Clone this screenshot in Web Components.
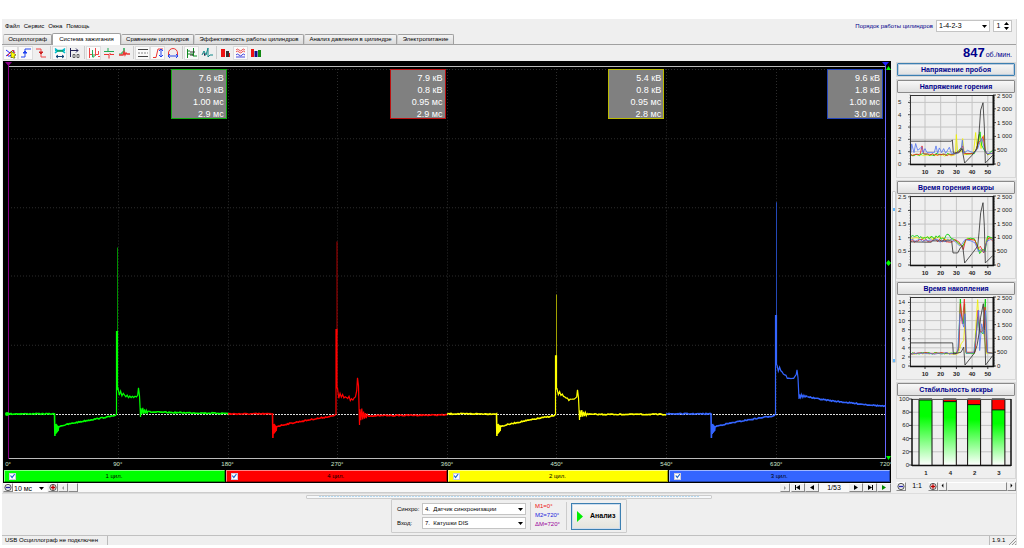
<!DOCTYPE html>
<html lang="ru">
<head>
<meta charset="utf-8">
<title>USB Осциллограф</title>
<style>
html,body{margin:0;background:#fff}
body{font:6px/10px "Liberation Sans",Arial,sans-serif;color:#000}
</style>
</head>
<body>
<scope-app></scope-app>
<script>
const RESET = `*{box-sizing:border-box}button,select,input{font:inherit;color:inherit;margin:0;padding:0}button{border:0;background:none}`;
function element(name, css, html) {
  customElements.define(name, class extends HTMLElement {
    connectedCallback() {
      if (this.shadowRoot) return;
      const root = this.attachShadow({mode: 'open'});
      const body = typeof html === 'function' ? html(this) : html;
      root.innerHTML = `<style>${RESET}${css}</style>${body}`;
    }
  });
}

/* Drop-down with a small black arrow */
element('drop-down', `
:host{display:block;position:relative}
select{appearance:none;width:100%;height:100%;border:1px solid #c4c4c4;border-radius:0;background:#fff;padding:0 10px 0 2px;display:block;outline:0}
:host([flat]) select{border-color:#fff;padding-left:0}
svg{position:absolute;right:3px;top:50%;margin-top:-1px;pointer-events:none}
`, el => `<select aria-label="${el.getAttribute('label')}"><option>${el.getAttribute('value')}</option></select>
<svg width="5" height="3"><path d="M0 0h5L2.500 3z"/></svg>`);

/* Menu */
element('menu-bar', `
:host{display:flex;height:14px;align-items:center;justify-content:space-between;padding:0 4px 0 3px}
nav,.order{display:flex;align-items:center}
nav{gap:4px}
nav button{line-height:14px}
label{color:#00008b;margin-right:3px}
drop-down{width:54px;height:12px;font-size:7px}
.spin{display:flex;width:19px;height:12px;border:1px solid #c4c4c4;background:#fff;margin-left:3px;align-items:center;font-size:7px}
.spin input{border:0;width:9px;height:10px;text-align:center;background:none}
`, `<nav><button>Файл</button><button>Сервис</button><button>Окна</button><button>Помощь</button></nav>
<div class="order"><label for="n">Порядок работы цилиндров</label><drop-down label="Порядок работы цилиндров" value="1-4-2-3"></drop-down>
<div class="spin"><input id="n" value="1"><svg width="7" height="8"><path d="M1 3h5L3.500 0zM1 5h5L3.500 8z"/></svg></div></div>`);

/* Tabs */
element('tab-strip', `
:host{display:flex;height:12px;align-items:flex-end;border-bottom:1px solid #a0a0a0;padding-left:1px}
button{height:10px;line-height:9px;border:1px solid #a0a0a0;border-bottom:0;border-left-color:#d0d0d0;border-radius:2px 2px 0 0;background:linear-gradient(#f4f4f4,#dadada);white-space:nowrap;overflow:visible}
button:first-child{border-left-color:#a0a0a0}
button.on{height:12px;background:#fff;margin-bottom:-1px;border-color:#a0a0a0}
`, `<button style="width:49px">Осциллограф</button><button class="on" style="width:69px">Система зажигания</button><button style="width:73px">Сравнение цилиндров</button><button style="width:110px">Эффективность работы цилиндров</button><button style="width:93px">Анализ давления в цилиндре</button><button style="width:57px">Электропитание</button>`);

/* Toolbar */
const ICONS = [
 [['Запуск','<path d="M1 3l4 3-4 3M3 9q4 1 6-6" stroke="#22f"/><path d="M2 9l6-6 2 3" stroke="#e22"/><path d="M6 4l5 4-2 1 1 2-2 0-1-1-1 1z" fill="#ff0" stroke="#440" stroke-width=".6"/>',1],
  ['Фронт','<path d="M1 10h4V2h6" stroke="#24e"/><path d="M3 6l2-2 2 2z" fill="#24e" stroke="#24e"/>',1],
  ['Спад','<path d="M1 2h5v8h5" stroke="#e44"/><path d="M4 5l2 2 2-2z" fill="#c22" stroke="#c22"/>']],
 [['Масштаб','<path d="M1 1.500q5 5 10 0M1 6q5-5 10 0M1 3.500h10" stroke="#0bc" stroke-width="1.500"/><path d="M3 4h6" stroke="#182"/><path d="M2 9.500h8M4 8L2 9.500 4 11M8 8l2 1.500L8 11" stroke="#147"/>',1],
  ['Сдвиг','<path d="M1.500 1v9M1 3.500h8M7 1.500l2 2-2 2" stroke="#225"/><path d="M4 7.500h2v3H4zM8 7.500h2v3H8z" stroke="#444" stroke-width=".8"/>']],
 [['Парад','<path d="M1.500 11V1M2 7.500h2.500V3" stroke="#e44"/><path d="M4.500 3v7H6V7" stroke="#2a5"/><path d="M7.500 1v8M8 7.500h2.500V4M10 9.500h2" stroke="#e44"/>',1],
  ['Растр','<path d="M1 4.500h4V1M5 4.500h6" stroke="#2a5"/><path d="M1 7.500h5v4M7 6v1.500h4" stroke="#e33"/>'],
  ['Наложение','<path d="M1 7h3V5h2V1v7" stroke="#2a5"/><path d="M1 8h4l1-3 1 3 1-2 1 1h3" stroke="#e33" stroke-width="1.400"/>']],
 [['Линии','<path d="M1 2.500h10M1 9.500h10" stroke="#444"/><path d="M1 6h10" stroke="#888" stroke-dasharray="2 1"/>',1],
  ['Высота','<path d="M1 10.500h3L6 2h5" stroke="#e33"/><path d="M9 2v8M7 4l2-2 2 2M7 8l2 2 2-2" stroke="#24e"/>',1],
  ['Дуга','<path d="M1.500 8V6a4.500 4.500 0 0 1 9 0v2" stroke="#e33"/><path d="M1 9h10M3 7L1 9l2 2M9 7l2 2-2 2" stroke="#24e"/>']],
 [['Значения','<path d="M1.500 2v9M1 4h3M1 7h6v2h4M7.500 1v8" stroke="#182"/><path d="M4 5h5M4 8h3" stroke="#333"/>',1],
  ['Амплитуда','<path d="M1 8l2-4 2 4 2-7v9l2-2h3" stroke="#188"/><path d="M3 6l1 3" stroke="#224"/>']],
 [['Отчет','<rect x="1" y="2" width="4" height="8" fill="#e11"/><rect x="6" y="4" width="3" height="6" fill="#333"/><path d="M9.500 6v4" stroke="#e11"/>'],
  ['Волны','<path d="M1 3q1-2 3 0t3 0 3 0M1 5q1-2 3 0t3 0 3 0" stroke="#e55"/><path d="M1 8q1-2 3 0t3 0 3 0M1 10h9" stroke="#44d"/>',1],
  ['Гистограмма','<rect x="1" y="2" width="3" height="8" fill="#e11"/><rect x="4.500" y="4" width="3" height="6" fill="#118"/><rect x="8" y="3" width="3" height="7" fill="#181"/>']]
];
element('tool-bar', `
:host{display:flex;height:15px;align-items:center;justify-content:space-between;padding:0 4px 0 1px}
.g{display:flex}.all{display:flex;gap:4px}
.g+.g::before{content:"";width:1px;height:13px;background:#ccc;margin:0 1px 0 -2px}
button{width:15px;height:14px;display:flex;align-items:center;justify-content:center}
button.on{background:#fafafa;border:1px solid #ddd}
svg{flex:none}
.rpm{display:flex;align-items:baseline;gap:1px;color:#00008b;font-size:7px}
b{font:bold 13px/14px "Liberation Sans",sans-serif}
`, () => `<div class="all">${ICONS.map(g => `<div class="g">${g.map(([n, p, on]) => `<button class="${on ? 'on' : ''}" aria-label="${n}"><svg width="12" height="12" viewBox="0 0 12 12" fill="none">${p}</svg></button>`).join('')}</div>`).join('')}</div>
<div class="rpm"><b>847</b><span>об./мин.</span></div>`);

/* Readings of one cylinder */
element('reading-box', `
:host{display:block;width:56px;height:50px;border:1px solid var(--c);background:#808080;color:#fff;font:9px/12px "Liberation Sans",sans-serif;text-align:right;padding:2px 2px 0 0;white-space:nowrap}
`, el => el.getAttribute('values').split('|').map(v => `<div>${v}</div>`).join(''));

/* Waveform */
let seed = 7;
const rnd = () => (seed = seed * 16807 % 2147483647) / 2147483647 - .5;
const P = a => a.map(p => p.join(',')).join(' ');
function trace(t) {
  const a = [], peak = t.peakX;
  for (let x = t.start; x < t.drop; x++) a.push([x, 413 + rnd()]);
  const ring = [0, t.low, 423, 433, 423, 432, 424, 431, 425, 430];
  ring.forEach((y, i) => a.push([t.drop + i * .4, i ? y : 413]));
  for (let x = t.drop + 4; x < peak - 1; x++) {
    const k = (x - t.drop) / (peak - t.drop);
    a.push([x, 427 - 12.500 * Math.pow(k, .8) + rnd()]);
  }
  a.push([peak - 1, 414]);
  const b = [[peak - .5, 414], [peak - .5, t.bright], [peak + .5, t.bright], [peak + .5, t.burn[0]]];
  const n = t.burn.length;
  for (let i = 0; i < n; i++) b.push([peak + 1 + i * (t.end - peak - 1) / n, t.burn[i] + rnd() * 1.5]);
  b.push([t.end - .5, t.bump], [t.end + .5, t.bump + 8], [t.end + 1.500, t.fall]);
  const d = t.fall - t.tail[0];
  [-.9, .6, -1, .5, -.6, .4, -.4, .3, -.2].forEach((k, i) => b.push([t.end + 2 + i * .9, t.tail[0] + k * d * .8]));
  const c = [];
  for (let x = t.end + 10; x <= t.stop; x++) {
    const k = (x - t.end - 10) / (t.stop - t.end - 10);
    c.push([x, t.tail[0] + (t.tail[1] - t.tail[0]) * Math.pow(k, .7) + rnd()]);
  }
  b.push(c[0]);
  return `<path d="M${peak + .5} ${t.top}V${t.bright + 4}" stroke="${t.dark}"/><g stroke="${t.color}"><polyline points="${P(a)}" stroke-width="1.600"/><polyline points="${P(b)}" stroke-width="1.200"/><polyline points="${P(c)}" stroke-width="1.600"/></g>`;
}
const TRACES = [
 {start:8,drop:54.500,low:435,peakX:117,top:247,bright:331,burn:[388,395,390,395,392,394,396,394,397,395,396,395,396,395,396,394],end:139,bump:387,fall:416,tail:[411,412.500],stop:228,color:'#0f0',dark:'#009000'},
 {start:228,drop:272.500,low:437,peakX:336.500,top:241,bright:329,burn:[387,397,392,397,394,397,396,397,398,396,400,398,399,397,396,390],end:358,bump:377,fall:424,tail:[415,414],stop:447,color:'#f00',dark:'#b00000'},
 {start:447,drop:496.500,low:435,peakX:556,top:294,bright:355,burn:[388,394,391,395,394,396,396,397,398,399,399,399,398,398,397,396],end:578,bump:389,fall:419,tail:[413.500,413.500],stop:666,color:'#ff0',dark:'#a0a000'},
 {start:666,drop:711,low:437,peakX:776,top:202,bright:315,burn:[364,370,366,370,371,373,374,375,377,377,378,378,378,377,376,374],end:797.500,bump:369,fall:398,tail:[395.500,405.500],stop:886,color:'#3465ff',dark:'#2348b8'}
];
element('wave-plot', `:host{display:block;min-height:200px;position:relative}
svg{position:absolute;inset:0;width:100%;height:100%}`, () => `
<svg viewBox="3 61 888 398" preserveAspectRatio="none" fill="none">
<g stroke="#2c2c2c" stroke-dasharray="1 2">
${[69.500,138.500,207.500,275.500,344.500].map(y => `<path d="M8 ${y}H886"/>`).join('')}
${[118,228,337,447,556,666,776].map(x => `<path d="M${x}.5 69V458"/>`).join('')}</g>
<path d="M8 66.500H886M8 457.500H886" stroke="#bbb"/>
<path d="M8 413.500H886" stroke="#ddd" stroke-dasharray="2 1"/>
<path d="M8.500 63V458" stroke="#808"/>
<path d="M885.500 63V458" stroke="#66f"/>
${TRACES.map(trace).join('')}
<path d="M5 62h7l-3.500 4z" fill="#808"/><path d="M882 62h7l-3.500 4z" fill="#22f"/>
<circle cx="7" cy="413" r="2" fill="#0f0"/>
<path d="M886 70h5l-2.500-4zM886 262.500l2.500-3 2.500 3-2.500 3zM886 455h5l-2.500 4z" fill="#0f0"/>
</svg>`);

/* Scope view: plot, degree scale, cylinder bars */
element('scope-view', `
:host{display:flex;flex-direction:column;background:#000;position:relative;min-width:0}
wave-plot{flex:1}
.deg{display:flex;justify-content:space-between;height:10px;padding:0 5px;color:#cfe8cf;line-height:9px}
.deg span{width:0;display:flex;justify-content:center}
.read{position:absolute;top:8px;left:5px;right:8px;display:grid;grid-template-columns:repeat(4,1fr);justify-items:end}
.cyl{display:grid;grid-template-columns:repeat(4,1fr);gap:1px;padding:0 1px 1px}
label{display:flex;align-items:center;height:12px;background:var(--c);border:1px solid;border-color:#ffffff88 #0005 #0005 #ffffff88;padding-left:4px;text-align:center}
label span{flex:1;padding-right:12px}
input{appearance:none;width:7px;height:7px;background:#fff;border:1px solid #ccd;position:relative}
input::before{content:"";position:absolute;inset:0;background:#26c;clip-path:polygon(0 45%,20% 35%,40% 60%,90% 0,100% 20%,42% 100%)}
`, () => {
  const cyl = [['1','#0f0','#1a1','7.6 кВ|0.9 кВ|1.00 мс|2.9 мс'],['4','#f00','#b11','7.9 кВ|0.8 кВ|0.95 мс|2.9 мс'],['2','#ff0','#bb0','5.4 кВ|0.8 кВ|0.95 мс|2.8 мс'],['3','#3465ff','#24b','9.6 кВ|1.8 кВ|1.00 мс|3.0 мс']];
  return `<wave-plot></wave-plot>
<div class="deg">${[0,90,180,270,360,450,540,630,720].map(d => `<span>${d}°</span>`).join('')}</div>
<div class="cyl">${cyl.map(c => `<label style="--c:${c[1]}"><input type="checkbox" checked><span>${c[0]} цил.</span></label>`).join('')}</div>
<div class="read">${cyl.map(c => `<reading-box style="--c:${c[2]}" values="${c[3]}"></reading-box>`).join('')}</div>`;
});

/* Round zoom glyphs and arrows */
const ZOOM = s => `<svg width="9" height="9" viewBox="0 0 9 9" fill="none"><circle cx="4.500" cy="4.500" r="3.500" stroke="#444"/><path d="${s ? 'M2 4.500h5M4.500 2v5' : 'M2 4.500h5'}" stroke="${s ? '#b00' : '#22a'}" stroke-width="1.500"/></svg>`;
const ARROW = (d, c = '#000') => `<svg width="8" height="6" viewBox="0 0 8 6"><path d="${d}" fill="${c}"/></svg>`;
const BTN = `button{height:9px;display:flex;align-items:center;justify-content:center;border:1px solid;border-color:#fff #888 #888 #eee;background:#f0f0f0;flex:none}`;
element('page-bar', `
:host{display:flex;height:10px;background:#f8f8f8;align-items:center;justify-content:space-between;border-bottom:1px solid #ccc;font-size:7px}
div{display:flex;align-items:center}${BTN}
.z{width:10px}.a{width:14px}.n{width:30px;text-align:center}drop-down{width:34px;height:9px;margin-right:1px}
.s{width:10px}.r{margin-right:1px}
`, `<div><button class="z" aria-label="Уменьшить">${ZOOM(0)}</button><drop-down flat label="Развертка" value="10 мс"></drop-down><button class="z" aria-label="Увеличить">${ZOOM(1)}</button><button class="s" aria-label="Влево">${ARROW('M5 1v4L3 3z', '#999')}</button><button class="s" aria-label="Ползунок"></button></div>
<div><button class="s r" aria-label="Вправо">${ARROW('M3 1v4l2-2z', '#999')}</button><button class="a" aria-label="В начало">${ARROW('M1 0h1v5H1zM2 2.500L6 0v5z')}</button><button class="a" aria-label="Назад">${ARROW('M2 2.500L6 0v5z')}</button><span class="n">1/53</span><button class="a" aria-label="Вперед">${ARROW('M6 2.500L2 0v5z')}</button><button class="a" aria-label="В конец">${ARROW('M6 0h1v5H6zM6 2.500L2 0v5z')}</button><button class="a" aria-label="Пуск">${ARROW('M6 2.500L2 0v5z', '#080')}</button></div>`);

element('zoom-bar', `
:host{display:flex;height:10px;align-items:center;font-size:7px}${BTN}
.z{width:10px}span{width:22px;text-align:center}.t{flex:1;background:#f2f2f2}.s{width:9px}
`, `<button class="z" aria-label="Уменьшить">${ZOOM(0)}</button><span>1:1</span><button class="z" aria-label="Увеличить">${ZOOM(1)}</button><button class="s" aria-label="Влево">${ARROW('M5 0v5L3 2.500z')}</button><button class="t" aria-label="Ползунок"></button><button class="s" aria-label="Вправо">${ARROW('M3 0v5l2-2.500z')}</button>`);

/* Trend charts: line points lie in a 246 by 206 field */
function jitter(from, to, y, amp) {
  let s = '';
  for (let x = from; x <= to; x += 5) s += `${x},${Math.round(y + rnd() * amp)} `;
  return s;
}
const CHARTS = {
 burnV: {left:[0,1,2,3,4,5], max:5.600, lines:[
  ['#ee0', jitter(0,130,179,6)+'133,176 136,118 140,172 152,168 155,130 160,178 178,176 188,170 194,112 198,160 204,118 210,160 218,120 224,170 230,178 245,174'],
  ['#0c0', jitter(0,120,178,8)+'125,178 140,170 150,158 156,165 165,176 190,175 200,150 207,110 212,150 220,165 230,178 245,165'],
  ['#e22', jitter(0,26,178,4)+'28,176 33,152 38,175 '+jitter(40,120,177,8)+'125,178 145,168 155,152 160,175 185,175 195,165 203,140 210,136 216,124 222,162 228,176 245,174'],
  ['#57e', '0,172 2,146 9,172 14,145 20,165 27,160 32,155 36,172 42,160 48,172 70,172 75,152 80,174 85,158 92,172 98,160 104,174 115,156 121,174 135,176 150,165 154,135 158,174 170,165 180,170 190,172 200,160 207,140 213,130 220,160 228,175 245,174'],
  ['#333', '0,138 121,138 124,134 127,173 143,173 153,160 161,203 183,180 198,160 204,115 209,45 216,23 220,95 223,203 245,180']]},
 burnT: {left:[0,.5,1,1.5,2,2.5], max:2.530, lines:[
  ['#ee0', jitter(0,125,126,10)+'130,132 140,140 150,150 158,145 170,125 180,130 190,128 200,150 212,168 220,160 228,125 245,128'],
  ['#0c0', jitter(0,105,124,12)+'108,114 114,116 120,126 130,130 142,140 155,150 165,130 178,126 190,128 200,150 206,172 215,158 222,165 230,120 245,126'],
  ['#e22', jitter(0,125,133,10)+'132,130 145,138 157,160 164,130 180,130 192,132 200,158 208,150 218,170 226,140 234,124 245,134'],
  ['#57e', jitter(0,125,132,10)+'132,136 145,148 152,145 162,130 180,134 192,140 202,165 210,160 218,168 228,134 245,128'],
  ['#333', '0,137 60,138 65,134 122,134 126,170 140,170 148,155 155,148 161,200 183,172 200,150 204,110 209,50 216,20 220,90 223,200 245,178']]},
 accT: {left:[0,2,4,6,8,10,12,14], max:15.200, lines:[
  ['#ee0', jitter(0,140,169,5)+'145,160 150,140 158,130 163,60 166,165 190,168 196,60 200,8 206,110 214,90 220,120 226,168 245,168'],
  ['#0c0', jitter(0,138,168,5)+'142,160 148,6 152,60 157,80 161,20 165,168 190,168 200,60 206,100 216,110 223,6 228,165 245,168'],
  ['#e22', jitter(0,138,168,5)+'144,150 148,20 154,80 160,6 165,165 192,165 201,40 208,105 216,100 222,30 228,165 245,168'],
  ['#57e', jitter(0,138,168,5)+'140,165 147,50 153,70 158,90 162,50 167,168 188,166 196,110 203,40 206,160 212,80 218,110 224,40 230,167 245,168'],
  ['#333', '0,137 125,137 127,170 150,165 158,150 162,203 190,168 198,145 204,110 209,60 217,20 221,100 224,203 245,175']]}
};
const CHART_CSS = `:host{display:block}.chart{display:block;width:100%}
text{font-size:6px;fill:#222}.b{font-weight:bold;text-anchor:middle}.e{text-anchor:end}`;
element('trend-chart', CHART_CSS, el => {
  const c = CHARTS[el.getAttribute('kind')], y0 = 71, h = 69;
  const ly = v => y0 - v / c.max * h, rx = i => 29 + i * 15.700, out = [];
  for (const v of c.left) out.push(`<path d="M15 ${ly(v)}H97" stroke="#c4c4c4"/><path d="M12 ${ly(v)}h3" stroke="#444"/><text class="${c.max > 14 ? 'e' : ''}" x="${c.max > 14 ? 9 : 2}" y="${ly(v) + 2}">${v}</text>`);
  for (let i = 0; i < 5; i++) out.push(`<path d="M${rx(i)} 2V71" stroke="#c4c4c4"/><path d="M${rx(i)} 71v3" stroke="#444"/><text class="b" x="${rx(i)}" y="81">${i * 10 + 10}</text>`);
  ['0','500','1 000','1 500','2 000','2 500'].forEach((t, i) => out.push(`<path d="M97 ${71 - i * 13.800}h3" stroke="#444"/><text x="101" y="${73 - i * 13.800 + (i == 5 ? 1 : 0)}">${t}</text>`));
  for (let i = 0; i < 26; i++) out.push(`<path d="M97 ${71 - i * 2.760}h2M13 ${71 - i * 2.760}h2" stroke="#888" stroke-width=".5"/>`);
  return `<svg class="chart" viewBox="1 0 118 84">${out.join('')}
<svg x="15" y="2" width="82" height="69" viewBox="0 0 246 206" preserveAspectRatio="none" fill="none">${c.lines.map(l => `<polyline points="${l[1]}" stroke="${l[0]}" stroke-width="2.500"/>`).join('')}</svg>
<path d="M14 2.500h84" stroke="#333"/><path d="M14.500 2v70" stroke="#333"/><path d="M14 71.500h84" stroke="#111" stroke-width="1.500"/><path d="M97.500 2v70" stroke="#111" stroke-width="2"/></svg>`;
});
element('bar-chart', CHART_CSS, () => {
  const out = [], y = v => 70 - v * .660;
  for (let v = 0; v <= 100; v += 20) out.push(`<path d="M16 ${y(v)}h99" stroke="#c4c4c4"/><path d="M13 ${y(v)}h3" stroke="#444"/><text class="e" x="13" y="${y(v) + 2}">${v}</text>`);
  [['1',98.500],['4',96],['2',91.500],['3',83.500]].forEach(([n, v], i) => { const x = 23 + i * 24.300;
    out.push(`<rect x="${x}" y="4" width="13" height="66" fill="#f00"/><rect x="${x}" y="${y(v)}" width="13" height="${v * .660}" fill="url(#g)"/><path d="M${x} 4v66M${x + 13} 4v66M${x} ${y(v)}h13M${x} 4h13" stroke="#111"/><text class="b" x="${x + 7}" y="80">${n}</text>`); });
  return `<svg class="chart" viewBox="1 1 118 82"><defs><linearGradient id="g" x1="0" y1="0" x2="0" y2="1"><stop offset="0" stop-color="#0f0"/><stop offset=".25" stop-color="#0f0"/><stop offset="1" stop-color="#fff"/></linearGradient></defs>${out.join('')}
<path d="M16 4.500h99" stroke="#555"/><path d="M16 4v67" stroke="#111" stroke-width="1.500"/><path d="M16 70.500h99" stroke="#111" stroke-width="1.500"/><path d="M115 4v67" stroke="#111" stroke-width="1.500"/></svg>`;
});
element('chart-panel', `
:host{display:block;border:1px solid #d8d8d8}
button{display:block;width:100%;height:13px;line-height:11px;border:1px solid #8a8a8a;border-radius:1px;background:linear-gradient(#f8f8f8,#e0e0e0);color:#00008b;font-weight:bold;font-size:7px}
:host([active]) button{border-color:#3c7fb1;box-shadow:inset 0 0 0 1px #bcd}
`, `<button><slot name="title"></slot></button><slot></slot>`);
element('side-panel', `:host{display:flex;flex-direction:column;gap:2px;padding-top:1px}`, `
<chart-panel active><span slot="title">Напряжение пробоя</span></chart-panel>
<chart-panel><span slot="title">Напряжение горения</span><trend-chart kind="burnV"></trend-chart></chart-panel>
<chart-panel><span slot="title">Время горения искры</span><trend-chart kind="burnT"></trend-chart></chart-panel>
<chart-panel><span slot="title">Время накопления</span><trend-chart kind="accT"></trend-chart></chart-panel>
<chart-panel><span slot="title">Стабильность искры</span><bar-chart></bar-chart></chart-panel>
<zoom-bar></zoom-bar>`);

/* Inputs and analysis */
element('control-panel', `
:host{display:flex;justify-content:center;padding-bottom:2px}
.box{display:flex;border:1px solid #ccc;border-radius:1px;height:34px;width:236px;align-items:center;padding:0 5px}
.f{display:grid;grid-template-columns:25px 104px;row-gap:2px;align-items:center}
drop-down{height:12px}
.m{border:solid #ccc;border-width:0 1px;margin:0 4px;padding:0 4px;width:37px;height:28px;line-height:9px}
.m div{white-space:nowrap}
.go{flex:1;height:27px;border:1px solid #3c7fb1;box-shadow:inset 0 0 0 1px #cde;background:linear-gradient(#fafafa,#e4e4dc);display:flex;align-items:center;font-weight:bold;font-size:7px;gap:7px;padding-left:5px}
`, `<div class="box"><div class="f"><span>Синхро:</span><drop-down label="Синхро" value="4.&nbsp; Датчик синхронизации"></drop-down><span>Вход:</span><drop-down label="Вход" value="7.&nbsp; Катушки DIS"></drop-down></div>
<div class="m"><div style="color:#e11">M1=0°</div><div style="color:#22d">M2=720°</div><div style="color:#909">ΔM=720°</div></div>
<button class="go"><svg width="6" height="11"><path d="M0 0v11l6-5.500z" fill="#0e0"/></svg>Анализ</button></div>`);
element('status-bar', `
:host{display:flex;height:10px;border-top:1px solid #c0c0c0;align-items:stretch;justify-content:space-between;line-height:9px}
.l{width:106px;padding-left:3px;border-right:1px solid #bbb;white-space:nowrap}
.r{width:27px;border-left:1px solid #bbb;display:flex;justify-content:space-between;align-items:center;padding-left:2px}
`, `<div class="l">USB Осциллограф не подключен</div><div class="r">1.9.1<svg width="8" height="8"><path d="M1 8l7-7M4 8l4-4M7 8l1-1" stroke="#999"/></svg></div>`);

element('split-grip', `
:host{display:flex;justify-content:center;align-items:center}
i{display:block;width:406px;height:4px;border:1px solid #ccc;border-radius:1px;background:repeating-linear-gradient(90deg,#b4d8f0 0 2px,#f4f4f4 2px 3px) center/380px 1px no-repeat #f6f8fa}
:host([vertical]) i{width:4px;height:172px;background:linear-gradient(#6bf 0 0) 50% 16px/3px 3px no-repeat,linear-gradient(#6bf 0 0) 50% 100%/3px 3px no-repeat,#f6fafc}
`, `<i></i>`);

element('scope-app', `
:host{display:block;padding:19px 7px 3px 2px}
.app{display:flex;flex-direction:column;background:#efefef;min-height:calc(100vh - 22px);border-right:1px solid #d8d8d8}
.main{flex:1;display:grid;grid-template-columns:1fr 4px 120px;padding:1px 0 0 1px}
.left{display:flex;flex-direction:column;min-width:0;margin-right:1px}
scope-view{flex:1}
split-grip.h{height:6px;border-top:1px solid #ddd}
`, `<div class="app"><menu-bar></menu-bar><tab-strip></tab-strip><tool-bar></tool-bar>
<div class="main"><div class="left"><scope-view></scope-view><page-bar></page-bar></div><split-grip vertical></split-grip><side-panel></side-panel></div>
<split-grip class="h"></split-grip><control-panel></control-panel><status-bar></status-bar></div>`);
</script>
</body>
</html>
